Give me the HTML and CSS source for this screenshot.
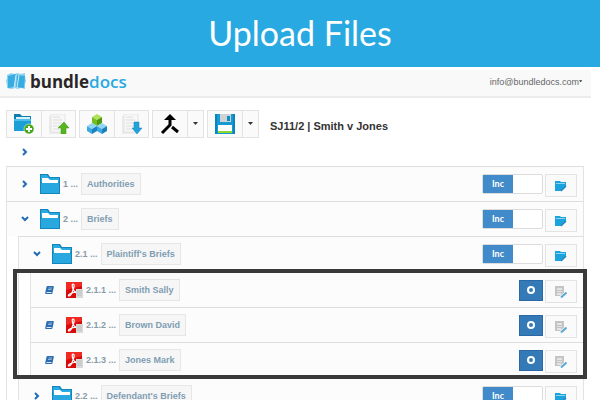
FILE: index.html
```html
<!DOCTYPE html>
<html lang="en">
  <head>
    <meta charset="UTF-8" />
    <meta name="viewport" content="width=device-width, initial-scale=1.0" />
    <title>Upload Files</title>
    <link rel="stylesheet" href="styles.css">
  </head>
  <body>
    <!-- Shared icons -->
    <svg class="sprite" aria-hidden="true">
      <symbol id="chevron" viewBox="0 0 8 8">
        <path d="M2 1l3 3-3 3" fill="none" stroke="#1f6cb5" stroke-width="2" />
      </symbol>
      <symbol id="folder" viewBox="0 0 20 20">
        <path d="M0 0h8l2 3h10v17H0z" fill="#1484bd" />
        <path d="M1 1h6l2 3h10v4H1z" fill="#29abe2" />
        <path d="M2 4h6l2 2h8v3H2z" fill="#fff" />
        <path d="M1 9h18v10H1z" fill="#29a8e0" />
      </symbol>
      <symbol id="folder-edit" viewBox="0 0 12 12">
        <path d="M0 1h5l1 1h5v9H0z" fill="#1ba3de" />
        <path d="M1 3h9v1H1z" fill="#8dd3f1" />
        <path d="M12 6v5H6z" fill="#fafafa" />
        <path d="M6 11l5-5" stroke="#2786ba" stroke-width="1.500" />
      </symbol>
      <symbol id="doc-edit" viewBox="0 0 12 12">
        <path d="M0 0h9v10H0z" fill="#c4c4c4" />
        <path d="M2 2h5v2H2zM2 5h5v1H2zM2 7h4v2H2z" fill="#e4e4e4" />
        <path d="M5 12l7-6" stroke="#fafafa" stroke-width="3" />
        <path d="M6 11.500l5.500-5" stroke="#5ba9d6" stroke-width="2" />
      </symbol>
      <symbol id="book" viewBox="0 0 9 8">
        <path d="M2.500 0H8q1 0 .8 1L7.500 7q-.2 1-1 1H1Q0 8 .2 7L1.500 1q.2-1 1-1z" fill="#2b6cb0" />
        <path d="M3.500 2h3.500M3 3.500h3.500" stroke="#a9c8e6" stroke-width=".8" />
        <path d="M1.500 6.500h5" stroke="#dce9f5" />
      </symbol>
      <symbol id="pdf" viewBox="0 0 17 17">
        <path d="M0 0h16v16H0z" fill="#d80a0a" />
        <path d="M0 0h16v4L0 8z" fill="#f02a22" />
        <path d="M7 2c2 0 1 4 0 6-1 3-3 6-4 6s-1-2 3-3c3-1 6-1 6 0S8 10 7 7 6 2 7 2z" fill="none" stroke="#fff" stroke-width="1.200" />
        <path d="M10 7h7v9h-7z" fill="#d9d9d9" />
        <path d="M11 9h5M11 11h5M11 13h5" stroke="#b5b5b5" stroke-width=".7" />
      </symbol>
      <symbol id="page" viewBox="0 0 22 20">
        <path d="M1 2h14v18H1z" fill="#ebebeb" />
        <path d="M3 0h14v18H3z" fill="#f7f7f7" stroke="#e4e4e4" />
        <path d="M5 3h7M5 6h9M5 9h9M5 12h9M5 15h6" stroke="#dedede" />
      </symbol>
      <symbol id="caret" viewBox="0 0 6 4">
        <path d="M0 0h5L2.500 3z" fill="#333" />
      </symbol>
    </svg>

    <header class="banner">
      <h1 class="banner-title">Upload Files</h1>
    </header>

    <div class="app">
      <nav class="navbar">
        <a class="brand" href="#">
          <svg class="brand-mark" viewBox="0 0 20 17" aria-hidden="true">
            <path d="M1 2l4-2 4 1 2-1 4 1 4-1v4l1 4-1 3v5l-4-1-4 1-1-1-5 1-4-1v-3L0 8l1-3z" fill="#8ed0ef" />
            <path d="M2 3l8-2-2 13-6 1z" fill="#35ade2" />
            <path d="M11 2l8 1-1 12-8-1z" fill="#35ade2" />
            <path d="M10 2L8 15" stroke="#c9e9f7" stroke-width="1" />
            <path d="M13 2l-2 13" stroke="#c9e9f7" stroke-width="1" />
          </svg>
          <span>bundle<span class="brand-docs">docs</span></span>
        </a>
        <a class="account" href="#">info@bundledocs.com<svg class="caret" aria-hidden="true"><use href="#caret" /></svg></a>
      </nav>

      <main class="content">
        <div class="toolbar">
          <div class="btn-group">
            <button class="tool" type="button" aria-label="New folder">
              <svg width="22" height="20" viewBox="0 0 22 20">
                <path d="M1 0h6l2 2h9v15H1z" fill="#0c7fae" />
                <path d="M3 3h14v3H3z" fill="#d8f0fa" />
                <path d="M1 5h17v12H1z" fill="#1b9fd6" />
                <path d="M1 5h17v2H1z" fill="#4dc0ea" />
                <circle cx="16" cy="15" r="5" fill="#45a818" stroke="#fff" stroke-width=".5" />
                <path d="M13 15h6M16 12v6" stroke="#fff" stroke-width="2" />
              </svg>
            </button>
            <button class="tool" type="button" aria-label="Upload files">
              <svg width="22" height="20" viewBox="0 0 22 20">
                <use href="#page" />
                <path d="M16 8l5 6h-3v6h-5v-6h-3z" fill="#54b520" stroke="#3d9a12" stroke-width=".5" />
              </svg>
            </button>
          </div>
          <div class="btn-group">
            <button class="tool" type="button" aria-label="Build bundle">
              <svg width="20" height="20" viewBox="0 0 20 20">
                <path d="M10 0l5 3-5 3-5-3z" fill="#b1e25a" />
                <path d="M5 3l5 3v6l-5-3z" fill="#72bd22" />
                <path d="M15 3l-5 3v6l5-3z" fill="#4f9a12" />
                <path d="M5 9l5 3-5 3-5-3zM15 9l5 3-5 3-5-3z" fill="#90d5f5" />
                <path d="M0 12l5 3v5l-5-3zM10 12l5 3v5l-5-3z" fill="#3caae2" />
                <path d="M10 12l-5 3v5l5-3zM20 12l-5 3v5l5-3z" fill="#1c80bd" />
              </svg>
            </button>
            <button class="tool" type="button" aria-label="Download">
              <svg width="22" height="20" viewBox="0 0 22 20">
                <use href="#page" />
                <path d="M13 8h5v6h3l-5 6-5-6h2z" fill="#22a2dc" stroke="#1480b5" stroke-width=".5" />
              </svg>
            </button>
          </div>
          <div class="btn-group">
            <button class="tool" type="button" aria-label="Merge">
              <svg width="20" height="20" viewBox="0 0 20 20">
                <path d="M2 19l8-8V3M12 13l6 5" fill="none" stroke="#000" stroke-width="3" />
                <path d="M4 6l6-6 6 6z" fill="#000" />
              </svg>
            </button>
            <button class="tool tool-drop" type="button" aria-label="Merge options"><svg class="caret" aria-hidden="true"><use href="#caret" /></svg></button>
          </div>
          <div class="btn-group">
            <button class="tool" type="button" aria-label="Save">
              <svg width="20" height="20" viewBox="0 0 20 20">
                <path d="M0 0h20v20H0z" fill="#159bd2" />
                <path d="M0 0h2v20H0zM18 0h2v20h-2z" fill="#0c84bb" />
                <path d="M5 0h11v8H5z" fill="#d0d3d5" />
                <path d="M12 2h3v5h-3z" fill="#128bbf" />
                <path d="M3 11h14v8H3z" fill="#fff" />
                <path d="M3 17h14v2H3z" fill="#8dd630" />
              </svg>
            </button>
            <button class="tool tool-drop" type="button" aria-label="Save options"><svg class="caret" aria-hidden="true"><use href="#caret" /></svg></button>
          </div>
          <h2 class="case-title">SJ11/2 | Smith v Jones</h2>
        </div>

        <button class="expand expand-all" type="button" aria-label="Expand all"><svg class="chevron"><use href="#chevron" /></svg></button>

        <ul class="tree">
          <li>
            <div class="row">
              <button class="expand" type="button" aria-label="Expand"><svg class="chevron"><use href="#chevron" /></svg></button>
              <svg class="folder" aria-hidden="true"><use href="#folder" /></svg>
              <span class="number">1 ...</span>
              <button class="name" type="button">Authorities</button>
              <label class="toggle"><input type="checkbox" checked aria-label="Include Authorities" /><span class="toggle-on">Inc</span></label>
              <button class="edit" type="button" aria-label="Edit Authorities"><svg><use href="#folder-edit" /></svg></button>
            </div>
          </li>
          <li>
            <div class="row">
              <button class="expand" type="button" aria-label="Collapse"><svg class="chevron open"><use href="#chevron" /></svg></button>
              <svg class="folder" aria-hidden="true"><use href="#folder" /></svg>
              <span class="number">2 ...</span>
              <button class="name" type="button">Briefs</button>
              <label class="toggle"><input type="checkbox" checked aria-label="Include Briefs" /><span class="toggle-on">Inc</span></label>
              <button class="edit" type="button" aria-label="Edit Briefs"><svg><use href="#folder-edit" /></svg></button>
            </div>
            <ul class="subtree">
              <li>
                <div class="row">
                  <button class="expand" type="button" aria-label="Collapse"><svg class="chevron open"><use href="#chevron" /></svg></button>
                  <svg class="folder" aria-hidden="true"><use href="#folder" /></svg>
                  <span class="number">2.1 ...</span>
                  <button class="name" type="button">Plaintiff's Briefs</button>
                  <label class="toggle"><input type="checkbox" checked aria-label="Include Plaintiff's Briefs" /><span class="toggle-on">Inc</span></label>
                  <button class="edit" type="button" aria-label="Edit Plaintiff's Briefs"><svg><use href="#folder-edit" /></svg></button>
                </div>
                <ul class="subtree files">
                  <li class="row">
                    <svg class="book" aria-hidden="true"><use href="#book" /></svg>
                    <svg class="pdf" aria-hidden="true"><use href="#pdf" /></svg>
                    <span class="number">2.1.1 ...</span>
                    <button class="name" type="button">Smith Sally</button>
                    <button class="status" type="button" aria-label="Status"><span class="ring"></span></button>
                    <button class="edit" type="button" aria-label="Edit Smith Sally"><svg><use href="#doc-edit" /></svg></button>
                  </li>
                  <li class="row">
                    <svg class="book" aria-hidden="true"><use href="#book" /></svg>
                    <svg class="pdf" aria-hidden="true"><use href="#pdf" /></svg>
                    <span class="number">2.1.2 ...</span>
                    <button class="name" type="button">Brown David</button>
                    <button class="status" type="button" aria-label="Status"><span class="ring"></span></button>
                    <button class="edit" type="button" aria-label="Edit Brown David"><svg><use href="#doc-edit" /></svg></button>
                  </li>
                  <li class="row">
                    <svg class="book" aria-hidden="true"><use href="#book" /></svg>
                    <svg class="pdf" aria-hidden="true"><use href="#pdf" /></svg>
                    <span class="number">2.1.3 ...</span>
                    <button class="name" type="button">Jones Mark</button>
                    <button class="status" type="button" aria-label="Status"><span class="ring"></span></button>
                    <button class="edit" type="button" aria-label="Edit Jones Mark"><svg><use href="#doc-edit" /></svg></button>
                  </li>
                </ul>
              </li>
              <li>
                <div class="row">
                  <button class="expand" type="button" aria-label="Expand"><svg class="chevron"><use href="#chevron" /></svg></button>
                  <svg class="folder" aria-hidden="true"><use href="#folder" /></svg>
                  <span class="number">2.2 ...</span>
                  <button class="name" type="button">Defendant's Briefs</button>
                  <label class="toggle"><input type="checkbox" checked aria-label="Include Defendant's Briefs" /><span class="toggle-on">Inc</span></label>
                  <button class="edit" type="button" aria-label="Edit Defendant's Briefs"><svg><use href="#folder-edit" /></svg></button>
                </div>
              </li>
            </ul>
          </li>
        </ul>
      </main>
    </div>
  </body>
</html>
```

FILE: styles.css
```css
* {
  box-sizing: border-box;
}
body {
  margin: 0;
  height: 100vh;
  overflow: hidden;
  background: #fff;
  font-family: "Liberation Sans", Arial, sans-serif;
  font-size: 9px;
  color: #333;
}
button {
  padding: 0;
  border: 0;
  background: none;
  font: inherit;
  color: inherit;
}
ul {
  list-style: none;
  margin: 0;
  padding: 0;
}
svg {
  display: block;
  flex: none;
}
.sprite {
  display: none;
}

/* Banner */
.banner {
  padding: 13px 0 14px;
  background: #28a9e1;
  text-align: center;
}
.banner-title {
  margin: 0;
  font-family: Lato, "Open Sans", sans-serif;
  font-size: 34px;
  font-weight: 400;
  line-height: 40px;
  color: #fff;
}

/* App header */
.app {
  margin: 3px 9px 0 0;
}
.navbar {
  display: flex;
  align-items: center;
  justify-content: space-between;
  height: 28px;
  padding: 0 8px 3px 6px;
  background: #f9f9f9;
  border-bottom: 2px solid #ececec;
}
.brand {
  display: flex;
  align-items: center;
  gap: 4px;
  font-family: "Open Sans", sans-serif;
  font-size: 17px;
  font-weight: 700;
  line-height: 22px;
  color: #2a2627;
  text-decoration: none;
}
.brand-mark {
  width: 20px;
  height: 17px;
}
.brand-docs {
  font-weight: 600;
  color: #28a9e1;
}
.account {
  display: flex;
  align-items: center;
  font-size: 9px;
  color: #666;
  text-decoration: none;
}
.caret {
  width: 6px;
  height: 4px;
}
.account .caret {
  width: 4px;
  height: 3px;
}

/* Toolbar */
.content {
  padding: 12px 7px 0 6px;
}
.toolbar {
  display: flex;
  align-items: center;
  gap: 3px;
}
.btn-group {
  display: flex;
  height: 28px;
  border: 1px solid #e3e3e3;
  background: #fafafa;
}
.tool {
  display: flex;
  align-items: center;
  justify-content: center;
  width: 34px;
}
.tool + .tool {
  border-left: 1px solid #e3e3e3;
}
.tool-drop {
  width: 16px;
}
.case-title {
  margin: 0 0 0 8px;
  padding-top: 3px;
  font-size: 11px;
  line-height: 14px;
}
.expand {
  display: flex;
  align-items: center;
  justify-content: center;
  width: 8px;
  height: 12px;
  margin: 0 11px 0 14px;
}
.expand-all {
  margin: 8px 0 8px 15px;
}
.chevron {
  width: 8px;
  height: 8px;
}
.chevron.open {
  transform: rotate(90deg);
}

/* Document tree */
.tree {
  border: solid #e3e3e3;
  border-width: 0 1px;
}
.subtree {
  margin-left: 11px;
  border-left: 1px solid #e3e3e3;
}
.row {
  display: flex;
  align-items: center;
  height: 35px;
  padding-right: 6px;
  background: #fcfcfc;
  border-top: 1px solid #dedede;
}
.folder {
  width: 20px;
  height: 20px;
}
.number {
  margin: 0 3px;
  font-weight: bold;
  color: #8a9ba8;
}
.name {
  height: 22px;
  margin-right: auto;
  padding: 0 5px;
  border: 1px solid #e6e6e6;
  background: #f6f6f6;
  font-weight: bold;
  color: #7f9db3;
}
.toggle {
  width: 61px;
  height: 20px;
  margin-right: 2px;
  border: 1px solid #dcdcdc;
  border-radius: 2px;
  background: #fff;
}
.toggle input {
  position: absolute;
  opacity: 0;
}
.toggle-on {
  display: block;
  width: 30px;
  height: 18px;
  background: #428bca;
  font-family: Lato, sans-serif;
  font-weight: bold;
  line-height: 18px;
  text-align: center;
  color: #fff;
}
.edit {
  display: flex;
  align-items: center;
  justify-content: center;
  width: 32px;
  height: 23px;
  margin-top: 3px;
  border: 1px solid #e3e3e3;
  background: #fafafa;
}
.edit svg {
  width: 12px;
  height: 12px;
}

/* Uploaded files, framed to draw attention */
.files {
  position: relative;
  padding: 1px 0;
}
.files::after {
  content: "";
  position: absolute;
  inset: -2px -4px -1px -18px;
  border: 4px solid #3a3a3a;
  pointer-events: none;
}
.book {
  width: 9px;
  height: 8px;
  margin: 0 12px 0 14px;
}
.pdf {
  width: 17px;
  height: 17px;
}
.status {
  display: flex;
  align-items: center;
  justify-content: center;
  width: 24px;
  height: 21px;
  margin-right: 2px;
  border: 1px solid #2a69a6;
  background: #337ab7;
}
.ring {
  width: 8px;
  height: 8px;
  border: 2px solid #fff;
  border-radius: 50%;
}
```
